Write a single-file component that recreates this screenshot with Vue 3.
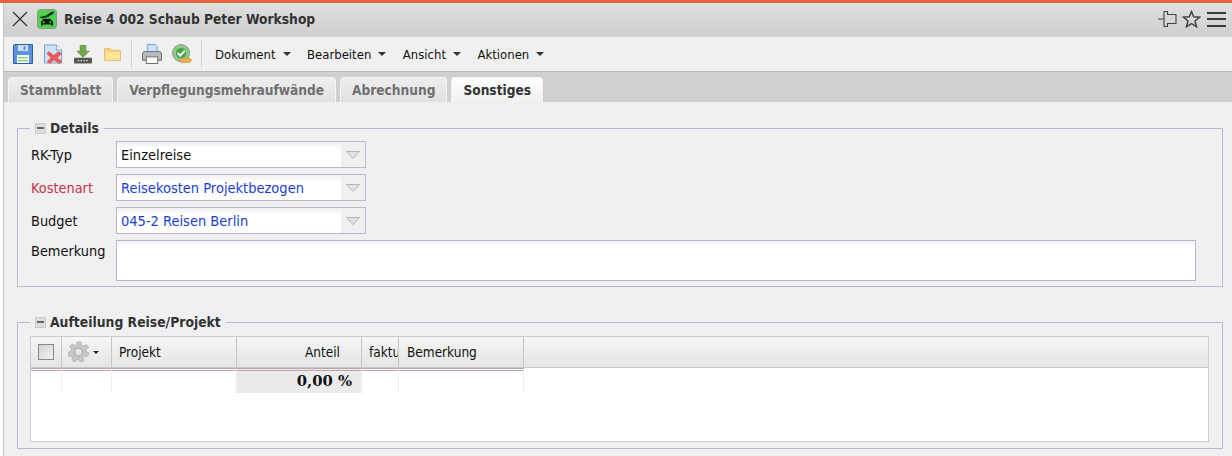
<template>
  <div class="page">
    <div class="win">
      <header class="titlebar">
        <svg class="close" viewBox="0 0 16 16" width="16" height="16"><path d="M1 1 15 15M15 1 1 15" stroke="#333" stroke-width="1.3" fill="none" /></svg>
        <svg class="trip" viewBox="0 0 20 20" width="20" height="20">
          <rect x=".5" y=".5" width="19" height="19" rx="3" fill="#4fd24f" stroke="#8a9a8a" />
          <path d="M2.500 8 9 6.500 14 3 17.500 2.500 16 5 11 8 5 9.500Z" fill="#16301c" />
          <path d="M5 12 6.500 9.800H13.500L15 12 16 12.500V16.500H14V15.500H6V16.500H4V12.500Z" fill="#0c1a10" />
          <circle cx="6.700" cy="13.300" r="1" fill="#4fd24f" /><circle cx="13.300" cy="13.300" r="1" fill="#4fd24f" />
        </svg>
        <h1 class="title">Reise 4 002 Schaub Peter Workshop</h1>
        <div class="win-actions">
          <svg viewBox="0 0 19 16" width="19" height="16"><path d="M0 8H6M6 .5H9.500V3.500H18V12.500H9.500V15.500H6Z" fill="none" stroke="#444" stroke-width="1.100" /></svg>
          <svg viewBox="0 0 19 18" width="19" height="18"><path d="M9.500 1.500 11.700 6.800 17.500 7.200 13 11 14.500 16.700 9.500 13.600 4.500 16.700 6 11 1.500 7.200 7.300 6.800Z" fill="none" stroke="#444" stroke-width="1.500" /></svg>
          <div class="burger"><i></i><i></i><i></i></div>
        </div>
      </header>

      <nav class="toolbar">
        <div class="tool-group">
          <svg viewBox="0 0 20 20" width="20" height="20">
            <path d="M.5 2Q.5.5 2 .5H19.500V19.500H.5Z" fill="#5b94dc" stroke="#2d5ea8" />
            <rect x="5" y="1" width="10" height="6" fill="#cfe0f5" /><rect x="10.500" y="2" width="2" height="4" fill="#5b94dc" />
            <rect x="4" y="11" width="12" height="8" fill="#fff" /><rect x="5" y="13" width="10" height="1.500" fill="#8fd080" /><rect x="5" y="16" width="10" height="1.500" fill="#8fd080" />
          </svg>
          <svg viewBox="0 0 20 20" width="19" height="20">
            <path d="M.5.5H13L18.500 6V19.500H.5Z" fill="#cfe3f8" stroke="#6f9fd4" />
            <path d="M13 .5V6H18.500" fill="#eef6fd" stroke="#6f9fd4" />
            <path d="M5 7 10.500 11 15 7 19 9.500 14.500 14 19.500 18 16 20.500 10.500 16.500 6 20.500 3 18 7 14 2.500 9.500Z" fill="#ea5a5a" />
          </svg>
          <svg viewBox="0 0 19 20" width="18" height="20">
            <path d="M6.500 1H12.500V7H16L9.500 13.500 3 7H6.500Z" fill="#6cab48" stroke="#55803a" stroke-width=".7" />
            <rect x="0" y="14" width="19" height="6" rx="1" fill="#55584f" />
            <path d="M4 17H5.500M7 17H8.500M10 17H11.500M13 17H14.500" stroke="#e6e6e6" stroke-width="1.200" />
          </svg>
          <svg class="folder" viewBox="0 0 19 16" width="18" height="15">
            <path d="M.5 14.500V1.500H6.500L8 3.500H17.500V14.500Z" fill="#f5d680" stroke="#e3ba76" />
            <path d="M1.500 5.500H16.500V13.500H1.500Z" fill="#fbe69a" />
          </svg>
        </div>
        <span class="tool-sep"></span>
        <div class="tool-group tight">
          <svg viewBox="0 0 21 21" width="20" height="20">
            <path d="M5.500 .5H14L16 3V9H5.500Z" fill="#cfe0f7" stroke="#6f9fd4" />
            <path d="M3 8H18Q20.500 8 20.500 10.500V17H.5V10.500Q.5 8 3 8Z" fill="#b8babd" stroke="#6a6c70" />
            <rect x="4.500" y="13.500" width="12" height="7" fill="#fff" stroke="#6a6c70" />
          </svg>
          <svg viewBox="0 0 21 21" width="20" height="20">
            <circle cx="9.500" cy="9.500" r="9" fill="#8ccb84" stroke="#7fa07a" />
            <circle cx="9.500" cy="9.500" r="5.500" fill="#4aa548" />
            <path d="M6 9.500 8.800 12.300 13.500 7" fill="none" stroke="#fff" stroke-width="2" />
            <path d="M9 15H18.500L21 17 18.500 19.500H9Z" fill="#eeb04f" stroke="#c9913f" stroke-width=".7" />
          </svg>
        </div>
        <span class="tool-sep narrow"></span>
        <div class="menu">
          <button v-for="item in menus" :key="item" class="menu-item">{{ item }}<span class="caret"></span></button>
        </div>
      </nav>

      <div class="tabs">
        <div v-for="tab in tabs" :key="tab" class="tab" :class="{ active: tab === 'Sonstiges' }">{{ tab }}</div>
      </div>

      <main class="content">
        <fieldset class="group details">
          <legend><span class="toggle"></span>Details</legend>
          <div class="form">
            <div v-for="row in rows" :key="row.label" class="row">
              <label :class="{ required: row.required }">{{ row.label }}</label>
              <div class="select" :class="{ link: row.link }">
                <span>{{ row.value }}</span>
                <div class="drop"><svg viewBox="0 0 14 8" width="14" height="8"><path d="M.5.5H13.500L7 7.500Z" fill="#e2e2e2" stroke="#b5b5b5" /></svg></div>
              </div>
            </div>
            <div class="row note">
              <label>Bemerkung</label>
              <div class="textarea"></div>
            </div>
          </div>
        </fieldset>

        <fieldset class="group split">
          <legend><span class="toggle"></span>Aufteilung Reise/Projekt</legend>
          <div class="grid">
            <div class="head">
              <div class="hc"><span class="check"></span></div>
              <div class="hc gear">
                <svg viewBox="0 0 22 22" width="22" height="22">
                  <path d="M9 1H13L13.500 4 16 5 18.500 3.500 20.500 6.500 18 8.500V10.500L21 12 19.500 15.500 16.500 15 15 17 15.500 20 12 21 10.500 18.500H9L7 21 4 19.500 4.500 16.500 3 15 0 15 0 11 3 10.500 3.500 8 1.500 5.500 4.500 3 7 4.500 9 3.500Z" fill="#c6c6c6" stroke="#b0b0b0" stroke-width=".7" />
                  <circle cx="10.500" cy="11" r="4" fill="#e6e6e6" stroke="#a8a8a8" />
                </svg>
                <span class="caret"></span>
              </div>
              <div class="hc">Projekt</div>
              <div class="hc right">Anteil</div>
              <div class="hc cut">faktu</div>
              <div class="hc wide">Bemerkung</div>
              <div class="hc last"></div>
            </div>
            <div class="sum">
              <div class="sc"></div>
              <div class="sc"></div>
              <div class="sc"></div>
              <div class="sc total">0,00 %</div>
              <div class="sc"></div>
              <div class="sc"></div>
            </div>
          </div>
        </fieldset>
      </main>
    </div>
  </div>
</template>

<script setup>
const menus = ['Dokument', 'Bearbeiten', 'Ansicht', 'Aktionen'];
const tabs = ['Stammblatt', 'Verpflegungsmehraufwände', 'Abrechnung', 'Sonstiges'];
const rows = [
  { label: 'RK-Typ', value: 'Einzelreise' },
  { label: 'Kostenart', value: 'Reisekosten Projektbezogen', required: true, link: true },
  { label: 'Budget', value: '045-2 Reisen Berlin', link: true },
];
</script>

<style>
html, body {
  margin: 0;
  background: #fff;
  overflow: hidden;
}
</style>

<style scoped>
.page {
  width: 1232px;
  height: 456px;
  overflow: hidden;
  border-top: 3px solid #e4623f;
  box-sizing: border-box;
  padding-left: 3px;
  font-family: "DejaVu Sans Condensed", "DejaVu Sans", sans-serif;
  font-stretch: condensed;
  font-size: 13px;
  color: #111;
}

.win {
  border-left: 1px solid #c8c8c8;
  height: 100%;
  background: #f0f0f0;
}

.titlebar {
  height: 32px;
  box-sizing: content-box;
  display: flex;
  align-items: center;
  padding-left: 8px;
  background: linear-gradient(#e0e0e0, #cfcfcf);
  border-bottom: 2px solid #d8d0d0;
}

.close {
  margin-right: 9px;
}

.title {
  margin: 0 0 0 7px;
  font-size: 13.700px;
  font-weight: bold;
  color: #333;
}

.win-actions {
  margin-left: auto;
  display: flex;
  align-items: center;
  gap: 5px;
  padding-right: 6px;
}

.burger {
  width: 19px;
  display: flex;
  flex-direction: column;
  gap: 4.500px;
  margin-left: 1px;
}

.burger i {
  height: 2px;
  background: #3a3a3a;
}

.toolbar {
  height: 34px;
  display: flex;
  align-items: center;
  padding-left: 9px;
  border-bottom: 1px solid #c4b8b8;
  background: #f0f0f0;
}

.tool-group {
  display: flex;
  align-items: center;
  gap: 11px;
}

.tool-group.tight {
  gap: 10px;
}

.folder {
  margin-left: 1px;
}

.tool-sep {
  width: 1px;
  height: 28px;
  background: #d4d4d4;
  margin: 0 10px 0 9px;
}

.tool-sep.narrow {
  margin: 0 13px 0 9px;
}

.menu {
  display: flex;
}

.menu-item {
  border: 0;
  padding: 0;
  background: none;
  font: inherit;
  color: #111;
  display: flex;
  align-items: center;
  margin-right: 16.500px;
}

.caret {
  display: inline-block;
  border: 4px solid transparent;
  border-top-color: #333;
  border-bottom: 0;
  margin-left: 7px;
}

.tabs {
  height: 30px;
  box-sizing: border-box;
  display: flex;
  align-items: flex-end;
  gap: 4px;
  padding-left: 4px;
  background: #d0d0d0;
}

.tab {
  height: 25px;
  box-sizing: border-box;
  padding: 0 11px;
  display: flex;
  align-items: center;
  font-size: 13.600px;
  font-weight: bold;
  color: #707070;
  background: linear-gradient(#eeeeee, #e0e0e0);
  border: 1px solid #f4f4f4;
  border-bottom: 0;
  border-radius: 4px 4px 0 0;
}

.tab.active {
  color: #333;
  background: linear-gradient(#ffffff, #f0f0f0);
}

.content {
  padding: 17px 9px 0 13px;
}

.group {
  margin: 0;
  padding: 0;
  border: 1px solid #b8b8d0;
}

.group legend {
  margin-left: 12px;
  padding: 0 5px;
  display: flex;
  align-items: center;
  font-size: 13.800px;
  font-weight: bold;
  color: #333;
  line-height: 18px;
}

.toggle {
  width: 11px;
  height: 11px;
  margin-right: 4px;
  background: linear-gradient(#666, #666) center / 7px 2px no-repeat, #ddd;
  box-sizing: border-box;
  border: 1px solid #ccc;
}

.details {
  height: 168px;
  box-sizing: border-box;
}

.form {
  padding: 4px 26px 0 13px;
  display: flex;
  flex-direction: column;
  gap: 6px;
}

.row {
  display: flex;
  align-items: center;
}

.row label {
  width: 85px;
  flex: none;
  font-size: 14.400px;
}

.row label.required {
  color: #c8324a;
}

.select {
  width: 250px;
  height: 27px;
  box-sizing: border-box;
  border: 1px solid #b8b8d0;
  background: linear-gradient(#f0f0f0, #fff 7px);
  display: flex;
  align-items: center;
  padding-left: 4px;
  font-size: 14.500px;
  color: #111;
}

.select.link {
  color: #1a3fd0;
}

.select span {
  flex: 1;
}

.drop {
  width: 24px;
  height: 100%;
  background: #f0f0f0;
  display: flex;
  align-items: center;
  justify-content: center;
}

.note {
  align-items: flex-start;
}

.note label {
  padding-top: 3px;
}

.textarea {
  flex: 1;
  height: 41px;
  box-sizing: border-box;
  border: 1px solid #b8b8d0;
  background: linear-gradient(#f0f0f0, #fff 7px);
}

.split {
  margin-top: 26px;
  height: 136px;
  box-sizing: border-box;
}

.grid {
  margin: 5px 13px 0 12px;
  height: 106px;
  box-sizing: border-box;
  border: 1px solid #cdcdcd;
  background: #fff;
}

.head,
.sum {
  display: grid;
  grid-template-columns: 31px 50px 125px 125px 37px 125px 1fr;
}

.head {
  height: 31px;
  box-sizing: border-box;
  border-bottom: 1px solid #c8c8c8;
  background: linear-gradient(#f6f6f6, #e4e5e6);
}

.hc {
  display: flex;
  align-items: center;
  padding-left: 7px;
  font-size: 13.500px;
  border-right: 1px solid #c8c8c8;
  overflow: hidden;
  white-space: nowrap;
}

.hc.right {
  justify-content: flex-end;
  padding-right: 21px;
}

.hc.cut {
  padding-left: 7px;
}

.hc.wide {
  padding-left: 8px;
}

.hc.last {
  border-right: 0;
}

.check {
  width: 16px;
  height: 16px;
  box-sizing: border-box;
  border: 1px solid #888;
  background: linear-gradient(135deg, #d0d0d0, #f4f4f4);
}

.gear .caret {
  margin-left: 3px;
  border-top-color: #222;
  border-width: 3px;
  border-bottom: 0;
}

.gear {
  padding-left: 6px;
}

.sum {
  height: 25px;
}

.sc {
  height: 25px;
  box-sizing: border-box;
  border-top: 3px double #b8a8a8;
  border-right: 1px solid #eeeeee;
}

.sc.total {
  background: #ebebeb;
  text-align: right;
  padding-right: 9px;
  font-family: "DejaVu Serif", serif;
  font-stretch: normal;
  font-weight: bold;
  font-size: 14.800px;
  line-height: 20px;
}
</style>
